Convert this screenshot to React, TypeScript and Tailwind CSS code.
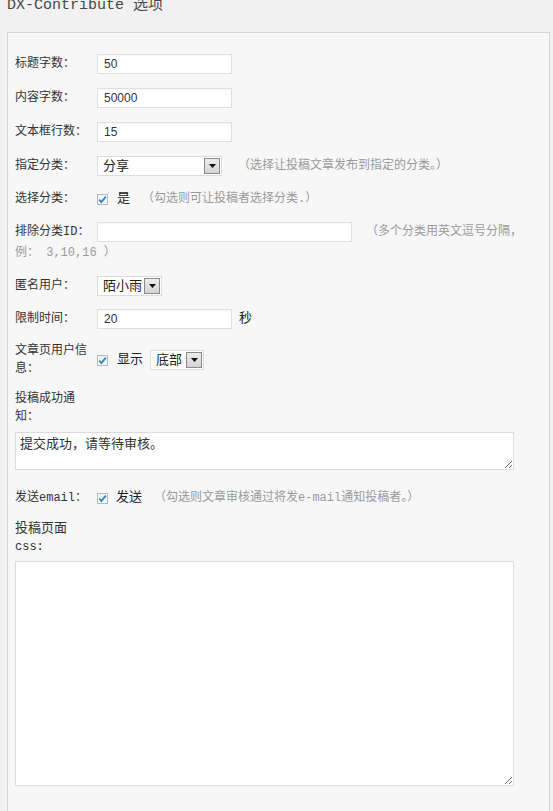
// DX-Contribute options panel (WordPress-style settings form)

const mono = 'font-["Liberation_Mono","Noto_Sans_CJK_SC",monospace]'

function Check() {
  return (
    <span className="inline-flex h-[11px] w-[11px] shrink-0 items-center justify-center border border-[#b4b9be] bg-gradient-to-b from-[#f4f4f4] to-[#ffffff]">
      <svg width="9" height="9" viewBox="0 0 9 9">
        <path d="M1.2 4.6 L3.4 7 L7.8 1.6" fill="none" stroke="#2a86c7" strokeWidth="1.8" />
      </svg>
    </span>
  )
}

function Select({ value, width }: { value: string; width: string }) {
  return (
    <div className={`flex h-[20px] items-center justify-between border border-[#dcdcdc] bg-white pl-[5px] pr-[1px] text-[13px] text-[#222] ${width}`}>
      <span className="leading-none">{value}</span>
      <span className="flex h-[16px] w-[16px] items-center justify-center border border-[#8a8a8a] bg-gradient-to-b from-[#ececec] to-[#d4d4d4]">
        <svg width="7" height="4" viewBox="0 0 7 4">
          <path d="M0 0 H7 L3.5 4 Z" fill="#111" />
        </svg>
      </span>
    </div>
  )
}

function Input({ value, width = 'w-[135px]' }: { value?: string; width?: string }) {
  return (
    <div className={`flex h-[20px] items-center border border-[#dfdfdf] bg-white px-[6px] font-["Liberation_Sans",sans-serif] text-[12px] text-[#333] shadow-[inset_0_1px_2px_rgba(0,0,0,0.04)] ${width}`}>
      {value}
    </div>
  )
}

function Label({ children }: { children: React.ReactNode }) {
  return <div className="w-[82px] shrink-0 text-[12px] leading-[18px] text-[#333]">{children}</div>
}

function Hint({ children, className = '' }: { children: React.ReactNode; className?: string }) {
  return <span className={`text-[12px] text-[#9a9a9a] ${className}`}>{children}</span>
}

export default function App() {
  return (
    <div className={`min-h-[811px] overflow-hidden bg-[#f1f1f1] ${mono}`}>
      {/* Title, cut at the top edge as in the screenshot */}
      <div className="flex h-[32px] flex-col overflow-hidden pl-[7px]">
        <div className="-mt-[4px] text-[15px] leading-[20px] text-[#464646]">DX-Contribute 选项</div>
      </div>

      {/* Panel */}
      <div className="ml-[7px] w-[543px] border border-b-0 border-[#d4d4d4] bg-[#f7f7f7] pl-[7px] pt-[21px] pb-[40px]">
        <div className="flex h-[20px] items-center">
          <Label>标题字数：</Label>
          <Input value="50" />
        </div>
        <div className="mt-[14px] flex h-[20px] items-center">
          <Label>内容字数：</Label>
          <Input value="50000" />
        </div>
        <div className="mt-[14px] flex h-[20px] items-center">
          <Label>文本框行数：</Label>
          <Input value="15" />
        </div>
        <div className="mt-[14px] flex h-[20px] items-center">
          <Label>指定分类：</Label>
          <Select value="分享" width="w-[125px]" />
          <Hint className="ml-[16px]">（选择让投稿文章发布到指定的分类。）</Hint>
        </div>
        <div className="mt-[13px] flex h-[20px] items-center">
          <Label>选择分类：</Label>
          <Check />
          <span className="ml-[9px] text-[13px] text-[#222]">是</span>
          <Hint className="ml-[12px]">（勾选则可让投稿者选择分类.）</Hint>
        </div>
        <div className="mt-[13px] flex h-[20px] items-center">
          <Label>排除分类ID：</Label>
          <Input width="w-[255px]" />
          <Hint className="ml-[14px]">（多个分类用英文逗号分隔，</Hint>
        </div>
        <div className="mt-[4px] text-[12px] leading-[14px]">
          <Hint>例： 3,10,16 ）</Hint>
        </div>
        <div className="mt-[16px] flex h-[20px] items-center">
          <Label>匿名用户：</Label>
          <Select value="陌小雨" width="w-[65px]" />
        </div>
        <div className="mt-[13px] flex h-[20px] items-center">
          <Label>限制时间：</Label>
          <Input value="20" />
          <span className="ml-[7px] text-[13px] text-[#222]">秒</span>
        </div>
        <div className="mt-[13px] flex items-center">
          <Label>
            文章页用户信
            <br />
            息：
          </Label>
          <Check />
          <span className="ml-[9px] mr-[7px] text-[13px] text-[#222]">显示</span>
          <Select value="底部" width="w-[54px]" />
        </div>
        <div className="mt-[12px]">
          <Label>
            投稿成功通
            <br />
            知：
          </Label>
        </div>
        <textarea
          readOnly
          defaultValue="提交成功，请等待审核。"
          className="mt-[6px] block h-[38px] w-[499px] border border-[#dcdcdc] bg-white px-[4px] py-[3px] text-[13px] leading-[18px] text-[#333] outline-none"
        />
        <div className="mt-[18px] flex h-[20px] items-center">
          <Label>发送email：</Label>
          <Check />
          <span className="ml-[8px] text-[13px] text-[#222]">发送</span>
          <Hint className="ml-[12px]">（勾选则文章审核通过将发e-mail通知投稿者。）</Hint>
        </div>
        <div className="mt-[12px] text-[#333]">
          <div className="text-[13px] leading-[18px]">投稿页面</div>
          <div className="text-[12px] leading-[18px]">css:</div>
        </div>
        <textarea
          readOnly
          className="mt-[5px] block h-[225px] w-[499px] border border-[#dcdcdc] bg-white outline-none"
        />
      </div>
    </div>
  )
}
